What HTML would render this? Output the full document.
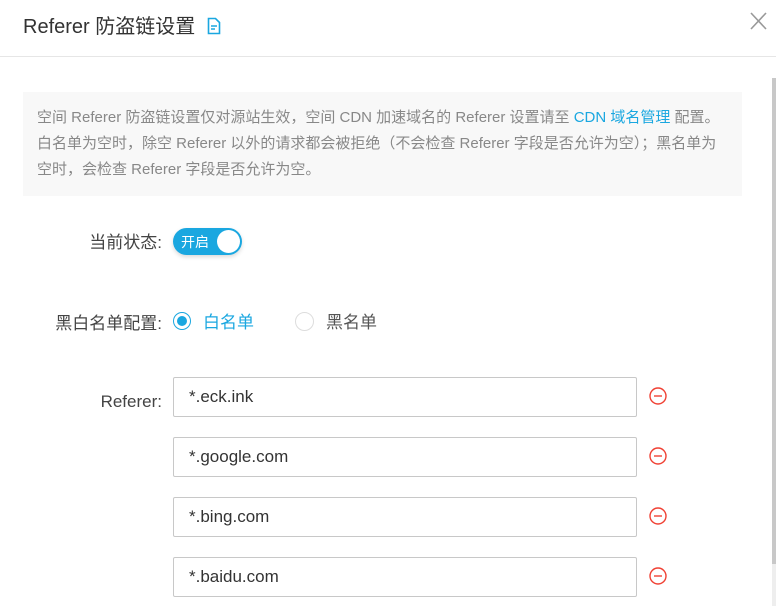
<!DOCTYPE html>
<html><head><meta charset="utf-8"><style>
body{margin:0;width:776px;height:606px;overflow:hidden;background:#fff;font-family:"Liberation Sans","Noto Sans CJK SC",sans-serif;position:relative;color:#333}
.a{position:absolute}
.hdr{left:0;top:0;width:776px;height:56px;border-bottom:1px solid #e6e6e6}
.title{left:23px;top:10px;font-size:20px;color:#333}
.notice{left:23px;top:92px;width:719px;height:104px;background:#f8f8f8}
.notice p{margin:0;position:absolute;left:14px;top:13px;font-size:15px;line-height:26px;color:#888;width:710px;white-space:nowrap}
.lbl{font-size:17px;color:#444;text-align:right;width:162px;left:0}
.inp{left:173px;width:462px;height:38px;border:1px solid #c8c8c8;border-radius:2px;font-size:17px;line-height:38px;color:#333;text-indent:15px}
</style></head><body>
<div class="a hdr"></div>
<div class="a title">Referer 防盗链设置
<svg width="14" height="18" viewBox="0 0 14 18" style="vertical-align:-2px;margin-left:6px"><path d="M1.5 1.5h7l4 4v11h-11z" fill="none" stroke="#1aa7e0" stroke-width="1.6"/><path d="M4 9h6M4 12h4" stroke="#1aa7e0" stroke-width="1.4"/></svg></div>
<svg class="a" style="left:750px;top:12px" width="17" height="18"><path d="M1 1L16 17M16 1L1 17" stroke="#999" stroke-width="1.6"/></svg>
<div class="a" style="left:772px;top:78px;width:4px;height:486px;background:#c8c8c8"></div>
<div class="a" style="left:772px;top:564px;width:4px;height:42px;background:#eee"></div>
<div class="a notice"><p>空间 Referer 防盗链设置仅对源站生效，空间 CDN 加速域名的 Referer 设置请至 <span style="color:#1aa7e0">CDN 域名管理</span> 配置。<br>白名单为空时，除空 Referer 以外的请求都会被拒绝（不会检查 Referer 字段是否允许为空）；黑名单为<br>空时，会检查 Referer 字段是否允许为空。</p></div>
<div class="a lbl" style="top:228px">当前状态:</div>
<div class="a" style="left:173px;top:228px;width:69px;height:27px;border-radius:14px;background:#1aa7e0;box-shadow:0 2px 4px rgba(0,0,0,.15)"><span class="a" style="left:8px;top:4px;color:#fff;font-size:14px">开启</span><div class="a" style="left:44px;top:2px;width:23px;height:23px;border-radius:50%;background:#fff"></div></div>
<div class="a lbl" style="top:309px">黑白名单配置:</div>
<div class="a" style="left:173px;top:312px;width:16px;height:16px;border:1.5px solid #1aa7e0;border-radius:50%"><div class="a" style="left:3px;top:3px;width:10px;height:10px;border-radius:50%;background:#1aa7e0"></div></div>
<div class="a" style="left:203px;top:308px;font-size:17px;color:#1aa7e0">白名单</div>
<div class="a" style="left:295px;top:312px;width:17px;height:17px;border:1px solid #ddd;border-radius:50%"></div>
<div class="a" style="left:326px;top:308px;font-size:17px;color:#555">黑名单</div>
<div class="a lbl" style="top:392px">Referer:</div>
<div class="a inp" style="top:377px">*.eck.ink</div>
<div class="a inp" style="top:437px">*.google.com</div>
<div class="a inp" style="top:497px">*.bing.com</div>
<div class="a inp" style="top:557px">*.baidu.com</div>
<svg class="a" style="left:648px;top:386px" width="20" height="220"><g fill="none" stroke="#f04134" stroke-width="1.4"><circle cx="10" cy="10" r="8"/><path d="M6 10h8"/><circle cx="10" cy="70" r="8"/><path d="M6 70h8"/><circle cx="10" cy="130" r="8"/><path d="M6 130h8"/><circle cx="10" cy="190" r="8"/><path d="M6 190h8"/></g></svg>
</body></html>
